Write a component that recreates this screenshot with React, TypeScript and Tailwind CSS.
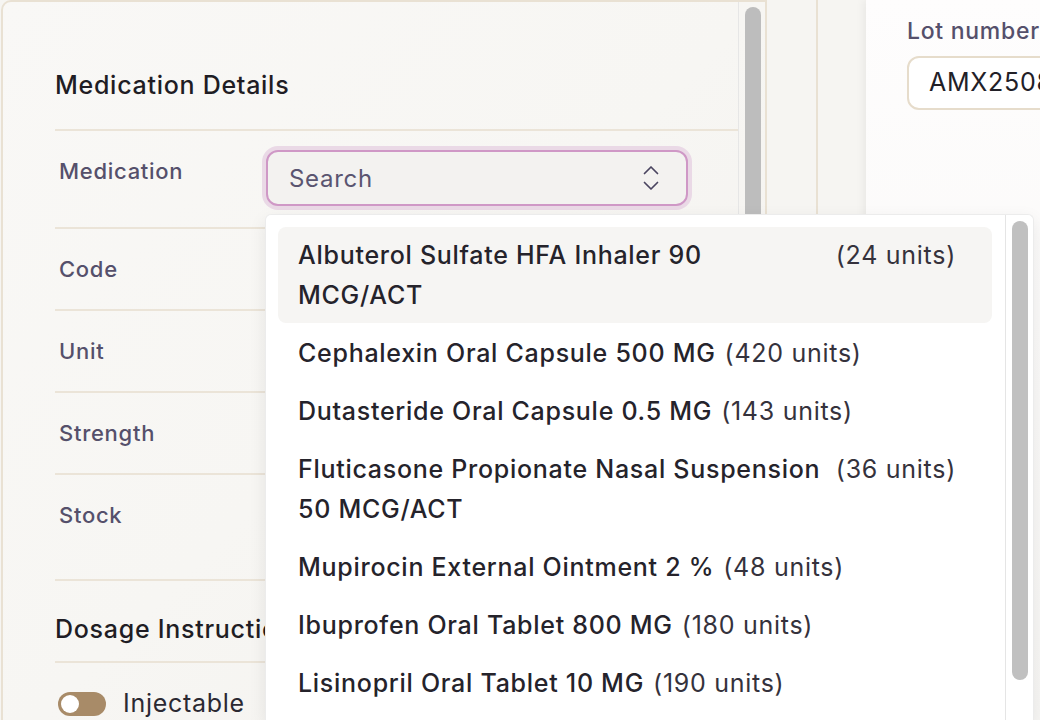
import * as React from "react"

type Med = { name: string; units: number }

const meds: Med[] = [
  { name: "Albuterol Sulfate HFA Inhaler 90 MCG/ACT", units: 24 },
  { name: "Cephalexin Oral Capsule 500 MG", units: 420 },
  { name: "Dutasteride Oral Capsule 0.5 MG", units: 143 },
  { name: "Fluticasone Propionate Nasal Suspension 50 MCG/ACT", units: 36 },
  { name: "Mupirocin External Ointment 2 %", units: 48 },
  { name: "Ibuprofen Oral Tablet 800 MG", units: 180 },
  { name: "Lisinopril Oral Tablet 10 MG", units: 190 },
]

const fieldRows = [
  { label: "Code", tall: false },
  { label: "Unit", tall: false },
  { label: "Strength", tall: false },
  { label: "Stock", tall: true },
]

function UpDownIcon() {
  return (
    <svg width="16" height="26" viewBox="0 0 16 26" fill="none" stroke="#4a4560" strokeWidth="1.7" strokeLinecap="round" strokeLinejoin="round">
      <path d="M1.5 8.5 8 2l6.5 6.5" />
      <path d="M1.5 17.5 8 24l6.5-6.5" />
    </svg>
  )
}

function MedicationOption({ med, active }: { med: Med; active?: boolean }) {
  return (
    <div
      className={
        "flex items-start gap-[9px] rounded-[8px] py-2 pl-5 pr-9 leading-[40px] " +
        (active ? "bg-[#f6f5f3]" : "")
      }
    >
      <span className="min-w-0 font-medium text-[#25232b]">{med.name}</span>
      <span className="shrink-0 whitespace-nowrap text-[#35323c]">({med.units} units)</span>
    </div>
  )
}

export default function App() {
  return (
    <div className="relative flex h-[720px] w-[1040px] overflow-hidden bg-[#f6f5f2] font-['Inter',sans-serif] tracking-[0.045em]">
      {/* medication form card */}
      <section className="ml-px flex h-[760px] w-[766px] shrink-0 rounded-tl-[10px] border-2 border-[#e9e1d3] bg-gradient-to-br from-[#f9f8f6] via-[#f7f6f3] to-[#f3f1ee]">
        <div className="flex-1 pl-[52px]">
          <div className="whitespace-nowrap border-b-2 border-[#ebe4d8] pb-[27px] pt-[66px] text-[25px] font-medium leading-[34px] text-[#1f1d24]">
            Medication Details
          </div>

          <div className="flex h-[98px] items-start border-b-2 border-[#ebe4d8] pt-[19px]">
            <div className="w-[211px] shrink-0 pl-1 pt-[5px] text-[22px] font-medium leading-[32px] text-[#55506b]">
              Medication
            </div>
            <div className="flex h-[56px] w-[422px] items-center justify-between rounded-[12px] border-2 border-[#cf98c6] bg-[#f3f2f0] pl-[21px] pr-[27px] ring-4 ring-[#ead9e6]">
              <span className="pt-px text-[24px] text-[#5a5570]">Search</span>
              <UpDownIcon />
            </div>
          </div>

          {fieldRows.map((row) => (
            <div
              key={row.label}
              className={
                "border-b-2 border-[#ebe4d8] pl-1 pt-[24px] text-[22px] font-medium leading-[32px] text-[#55506b] " +
                (row.tall ? "h-[106px]" : "h-[82px]")
              }
            >
              {row.label}
            </div>
          ))}

          <div className="h-[82px] whitespace-nowrap border-b-2 border-[#ebe4d8] pt-[31px] text-[25px] font-medium leading-[34px] text-[#1f1d24]">
            Dosage Instructions
          </div>

          <div className="flex h-[82px] items-center gap-[17px] pl-[3px]">
            <div className="flex h-6 w-12 items-center rounded-full bg-[#a88b68] px-[3px]">
              <div className="h-[18px] w-[18px] rounded-full bg-white" />
            </div>
            <span className="text-[25px] text-[#2b2932]">Injectable</span>
          </div>
        </div>

        <div className="w-[27px] shrink-0 border-l border-[#e6e6e6] pl-[6px] pt-[5px]">
          <div className="h-[740px] w-4 rounded-full bg-[#bdbdbd]" />
        </div>
      </section>

      <div className="w-[49px] shrink-0" />
      <div className="w-[2px] shrink-0 bg-[#e9e1d3]" />
      <div className="w-[48px] shrink-0" />

      {/* batch details card */}
      <section className="min-w-0 flex-1 bg-gradient-to-b from-[#fefdfd] to-[#f7f6f4] pl-[41px] pt-[15px] shadow-[-3px_0_8px_rgba(0,0,0,0.05)]">
        <div className="whitespace-nowrap text-[23px] font-medium leading-[32px] text-[#55506b]">Lot number</div>
        <div className="mt-[9px] flex h-[54px] w-[240px] items-center whitespace-nowrap rounded-[12px] border-2 border-[#e6dccb] bg-white pl-5 text-[25px] text-[#222027]">
          AMX250814
        </div>
      </section>

      {/* medication search results */}
      <div className="absolute left-[265px] top-[214px] flex h-[506px] w-[769px] rounded-t-[6px] border border-b-0 border-[#ececec] bg-white text-[25px] shadow-[0_6px_18px_rgba(0,0,0,0.08)]">
        <div className="flex flex-1 flex-col gap-[2px] overflow-hidden pl-3 pr-[13px] pt-3">
          {meds.map((m, i) => (
            <MedicationOption key={m.name} med={m} active={i === 0} />
          ))}
        </div>
        <div className="w-[28px] shrink-0 border-l border-[#e5e5e5] pl-[6px] pt-[6px]">
          <div className="h-[459px] w-4 rounded-full bg-[#c0c0c0]" />
        </div>
      </div>
    </div>
  )
}
